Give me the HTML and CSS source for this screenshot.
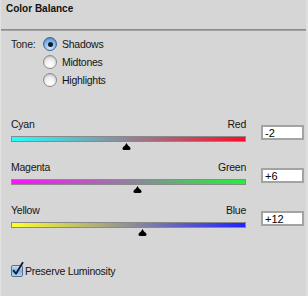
FILE: index.html
```html
<!DOCTYPE html>
<html>
<head>
<meta charset="utf-8">
<link rel="stylesheet" href="styles.css">
</head>
<body>
<div class="panel">
  <div class="title">Color Balance</div>
  <div class="divider"></div>

  <div class="tone">
    <div class="tone-label">Tone:</div>
    <div class="radios">
      <div class="radio-row"><span class="radio on"></span><span>Shadows</span></div>
      <div class="radio-row"><span class="radio"></span><span>Midtones</span></div>
      <div class="radio-row"><span class="radio"></span><span>Highlights</span></div>
    </div>
  </div>

  <div class="sliders">
    <div class="slider">
      <div class="slider-main">
        <div class="ends"><span>Cyan</span><span>Red</span></div>
        <div class="track cyan-red">
          <svg class="thumb" style="left:110px" width="9" height="7" viewBox="0 0 9 7"><path d="M4.5 0 L6 2.5 Q8.6 4 8.6 5.6 Q8.6 7 7.2 7 L1.8 7 Q0.4 7 0.4 5.6 Q0.4 4 3 2.5 Z" fill="#000"/></svg>
        </div>
      </div>
      <div class="value">-2</div>
    </div>

    <div class="slider">
      <div class="slider-main">
        <div class="ends"><span>Magenta</span><span>Green</span></div>
        <div class="track magenta-green">
          <svg class="thumb" style="left:121px" width="9" height="7" viewBox="0 0 9 7"><path d="M4.5 0 L6 2.5 Q8.6 4 8.6 5.6 Q8.6 7 7.2 7 L1.8 7 Q0.4 7 0.4 5.6 Q0.4 4 3 2.5 Z" fill="#000"/></svg>
        </div>
      </div>
      <div class="value">+6</div>
    </div>

    <div class="slider">
      <div class="slider-main">
        <div class="ends"><span>Yellow</span><span>Blue</span></div>
        <div class="track yellow-blue">
          <svg class="thumb" style="left:126px" width="9" height="7" viewBox="0 0 9 7"><path d="M4.5 0 L6 2.5 Q8.6 4 8.6 5.6 Q8.6 7 7.2 7 L1.8 7 Q0.4 7 0.4 5.6 Q0.4 4 3 2.5 Z" fill="#000"/></svg>
        </div>
      </div>
      <div class="value">+12</div>
    </div>
  </div>

  <div class="preserve">
    <svg class="check" width="13" height="15" viewBox="0 0 13 15">
      <defs>
        <linearGradient id="cb" x1="0" y1="0" x2="0" y2="1">
          <stop offset="0" stop-color="#cfe3f7"/>
          <stop offset="0.5" stop-color="#7fb2e6"/>
          <stop offset="1" stop-color="#b9dbf8"/>
        </linearGradient>
      </defs>
      <rect x="0.5" y="3.5" width="11" height="11" rx="1.5" fill="url(#cb)" stroke="#5a6f8a"/>
      <path d="M2.6 8.6 L5 11.8 L11.6 0.8" fill="none" stroke="#0d1c33" stroke-width="1.8" stroke-linecap="round" stroke-linejoin="round"/>
    </svg>
    <span>Preserve Luminosity</span>
  </div>
</div>
</body>
</html>
```

FILE: styles.css
```css
html, body {
  margin: 0;
  padding: 0;
  background: #d6d6d6;
}

.panel {
  width: 308px;
  height: 296px;
  box-sizing: border-box;
  border-left: 1px solid #e2e2e2;
  border-right: 2px solid #dfdfdf;
  font-family: "Liberation Sans", Arial, sans-serif;
  font-size: 10.5px;
  letter-spacing: -0.25px;
  color: #141414;
  background: #d6d6d6;
}

.title {
  height: 29px;
  box-sizing: border-box;
  padding: 3px 0 0 5px;
  font-weight: bold;
  font-size: 10px;
  letter-spacing: 0;
  line-height: 12px;
  color: #111;
}

.divider {
  height: 1px;
  border-top: 1px solid #898989;
  background: #a4a4a4;
}

.tone {
  display: flex;
  margin-top: 4px;
  padding-left: 10px;
}

.tone-label {
  width: 32px;
  line-height: 18px;
  color: #222;
}

.radios {
  display: flex;
  flex-direction: column;
}

.radio-row {
  display: flex;
  align-items: center;
  height: 18px;
  gap: 5px;
}

.radio {
  width: 12px;
  height: 12px;
  border-radius: 50%;
  border: 1px solid #8b8b8b;
  background: radial-gradient(circle at 50% 75%, #ffffff 0%, #f2f2f2 40%, #cfcfcf 100%);
  box-shadow: inset 0 1px 1px rgba(0,0,0,0.15);
  display: flex;
  align-items: center;
  justify-content: center;
}

.radio.on {
  border-color: #44638a;
  background: radial-gradient(circle at 50% 80%, #d8ecff 0%, #8ebff0 45%, #4f8fd6 100%);
}

.radio.on::after {
  content: "";
  width: 5px;
  height: 5px;
  border-radius: 50%;
  background: #0f1a2a;
}

.sliders {
  display: flex;
  flex-direction: column;
  gap: 12px;
  margin-top: 29px;
  padding-left: 10px;
}

.slider {
  display: flex;
  gap: 15px;
  align-items: flex-start;
}

.slider-main {
  width: 235px;
}

.ends {
  display: flex;
  justify-content: space-between;
  line-height: 12px;
  height: 12px;
}

.track {
  position: relative;
  margin-top: 6px;
  height: 4px;
  border: 1px solid #8a8a8a;
  margin-bottom: 7px;
}

.thumb {
  position: absolute;
  top: 6px;
  display: block;
}

.cyan-red {
  background: linear-gradient(to right, #22ffff, #ff0a2a);
}

.magenta-green {
  background: linear-gradient(to right, #ff10ff, #22f23c);
}

.yellow-blue {
  background: linear-gradient(to right, #ffff2a, #2222ff);
}

.value {
  margin-top: 7px;
  width: 37px;
  height: 11px;
  border: 2px solid #a3a3a3;
  background: #fff;
  font-size: 11px;
  letter-spacing: 0;
  line-height: 12px;
  padding-left: 2px;
  box-sizing: content-box;
  color: #000;
}

.preserve {
  display: flex;
  align-items: center;
  gap: 1px;
  margin-top: 29px;
  padding-left: 10px;
  line-height: 14px;
}

.check {
  display: block;
  margin-top: -3px;
}
```
